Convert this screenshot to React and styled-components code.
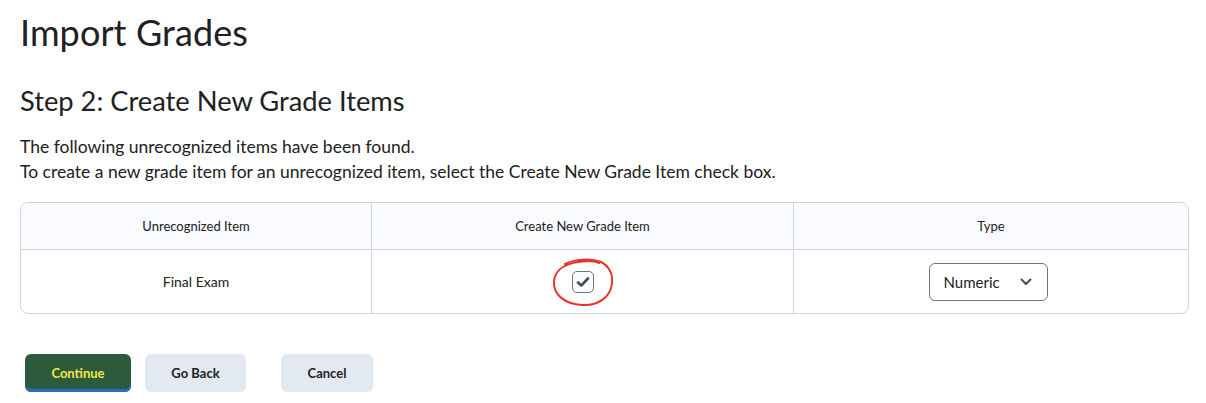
import React from 'react';
import styled, { createGlobalStyle } from 'styled-components';

const GlobalStyle = createGlobalStyle`
  html, body {
    margin: 0;
    padding: 0;
    background: #ffffff;
    font-family: Lato, "Noto Sans", sans-serif;
    color: #202122;
  }
`;

const Page = styled.div`
  width: 1169px;
  padding: 8px 17px 0 20px;
`;

const Title = styled.h1`
  margin: 0;
  font-size: 36px;
  font-weight: 400;
  line-height: 48px;
  letter-spacing: 0.1px;
`;

const StepHeading = styled.h2`
  margin: 27px 0 0;
  font-size: 27.3px;
  font-weight: 400;
  line-height: 36px;
`;

const Intro = styled.p`
  margin: 15px 0 0;
  font-size: 17.5px;
  line-height: 25px;
`;

const TableWrap = styled.div`
  margin-top: 18px;
  border: 1px solid #cdd5dc;
  border-radius: 8px;
  overflow: hidden;
`;

const Table = styled.table`
  width: 100%;
  border-collapse: collapse;
  table-layout: fixed;
`;

const HeadCell = styled.th`
  height: 46px;
  padding: 0;
  background: #f9fbff;
  font-size: 13px;
  font-weight: 400;
  color: #202122;
  text-align: center;
  border-bottom: 1px solid #cdd5dc;
  border-left: ${p => (p.$first ? 'none' : '1px solid #cdd5dc')};
  width: ${p => p.$w}px;
`;

const Cell = styled.td`
  height: 63px;
  padding: 0;
  font-size: 14px;
  text-align: center;
  border-left: ${p => (p.$first ? 'none' : '1px solid #cdd5dc')};
`;

const CheckSpot = styled.span`
  position: relative;
  display: inline-flex;
  vertical-align: middle;
`;

const Checkbox = styled.span`
  display: inline-flex;
  align-items: center;
  justify-content: center;
  width: 20px;
  height: 20px;
  border: 1px solid #6e7477;
  border-radius: 5px;
  background: #f9fbff;
`;

const Circle = styled.svg`
  position: absolute;
  left: -21px;
  top: -13px;
  pointer-events: none;
`;

const Select = styled.span`
  display: inline-flex;
  align-items: center;
  justify-content: space-between;
  box-sizing: border-box;
  width: 119px;
  height: 38px;
  margin-right: 6px;
  padding: 0 15px 0 14px;
  border: 1px solid #6e7477;
  border-radius: 6px;
  font-size: 15px;
  vertical-align: middle;
`;

const Actions = styled.div`
  display: flex;
  margin-top: 40px;
  padding-left: 5px;
`;

const Button = styled.button`
  box-sizing: border-box;
  height: 38px;
  padding: 0;
  width: ${p => p.$w}px;
  margin-right: ${p => p.$gap}px;
  border: none;
  border-radius: 6px;
  font-family: Lato, "Noto Sans", sans-serif;
  font-size: 13px;
  font-weight: 700;
  color: ${p => (p.$primary ? '#f4e74a' : '#202122')};
  background: ${p => (p.$primary ? '#2b5b3a' : '#e3e9f1')};
  box-shadow: ${p => (p.$primary ? 'inset 0 -3px 0 #2a6ebb' : 'none')};
`;

const Check = () => (
  <svg width="14" height="12" viewBox="0 0 14 12">
    <path d="M2 6.5 L5.3 9.5 L12 2.5" fill="none" stroke="#494c4e" strokeWidth="2.6" strokeLinecap="round" strokeLinejoin="round" />
  </svg>
);

const Chevron = () => (
  <svg width="12" height="8" viewBox="0 0 12 8">
    <path d="M1.5 1.5 L6 6 L10.5 1.5" fill="none" stroke="#494c4e" strokeWidth="2" strokeLinecap="round" strokeLinejoin="round" />
  </svg>
);

const App = () => (
  <>
    <GlobalStyle />
    <Page>
      <Title>Import Grades</Title>
      <StepHeading>Step 2: Create New Grade Items</StepHeading>
      <Intro>
        The following unrecognized items have been found.
        <br />
        To create a new grade item for an unrecognized item, select the Create New Grade Item check box.
      </Intro>
      <TableWrap>
        <Table>
          <thead>
            <tr>
              <HeadCell $first $w={350}>Unrecognized Item</HeadCell>
              <HeadCell $w={421}>Create New Grade Item</HeadCell>
              <HeadCell>Type</HeadCell>
            </tr>
          </thead>
          <tbody>
            <tr>
              <Cell $first>Final Exam</Cell>
              <Cell>
                <CheckSpot>
                  <Checkbox>
                    <Check />
                  </Checkbox>
                  <Circle width="64" height="50" viewBox="0 0 64 50">
                    <path
                      d="M14 6 C 24 1, 40 0, 50 4 C 58 8, 62 16, 61 25 C 60 39, 47 48, 31 47 C 14 46, 2 37, 3 23 C 4 11, 16 4, 36 3 C 42 3, 46 4, 48 5"
                      fill="none"
                      stroke="#e8322b"
                      strokeWidth="2"
                      strokeLinecap="round"
                    />
                  </Circle>
                </CheckSpot>
              </Cell>
              <Cell>
                <Select>
                  Numeric
                  <Chevron />
                </Select>
              </Cell>
            </tr>
          </tbody>
        </Table>
      </TableWrap>
      <Actions>
        <Button $primary $w={106} $gap={14}>Continue</Button>
        <Button $w={101} $gap={35}>Go Back</Button>
        <Button $w={92} $gap={0}>Cancel</Button>
      </Actions>
    </Page>
  </>
);

export default App;
